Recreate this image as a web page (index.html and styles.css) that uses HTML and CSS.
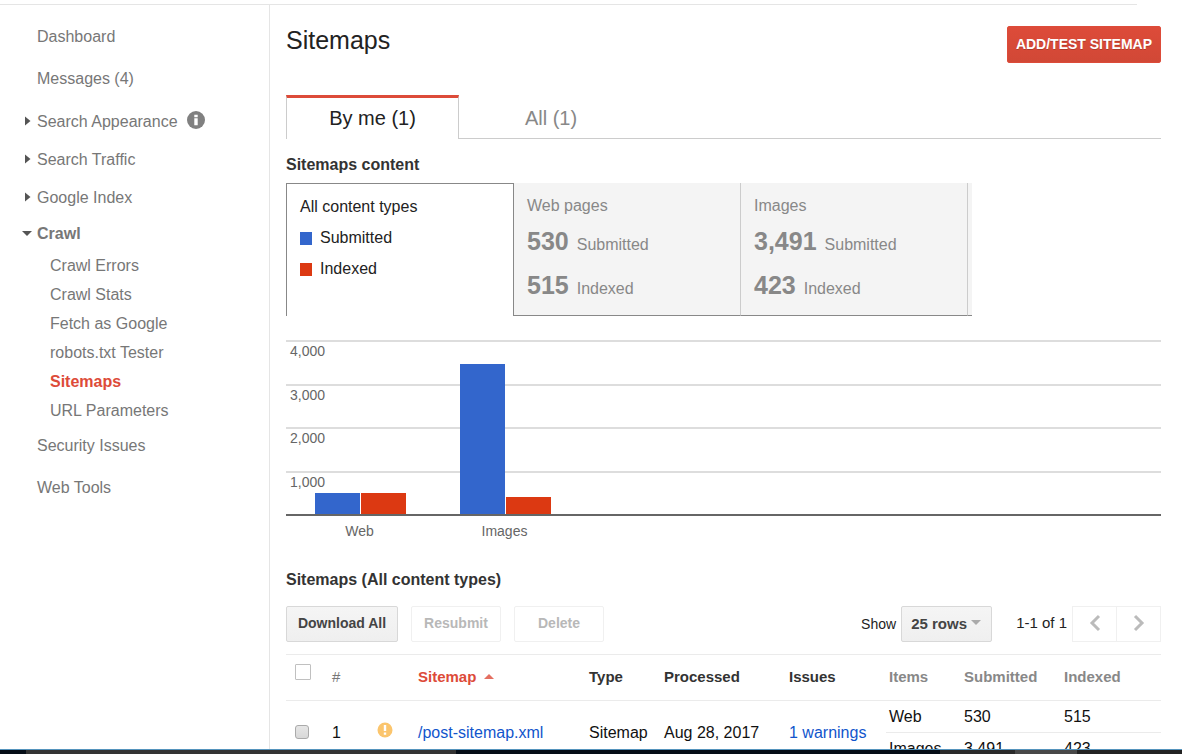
FILE: index.html
```html
<!DOCTYPE html>
<html lang="en">
<head>
<meta charset="utf-8">
<title>Sitemaps</title>
<link rel="stylesheet" href="styles.css">
</head>
<body>
<div class="topline"></div>
<div class="shell">
  <nav class="sidebar" aria-label="Site">
    <ul class="nav">
      <li><a class="nav-link" href="#">Dashboard</a></li>
      <li><a class="nav-link" href="#">Messages (4)</a></li>
    </ul>
    <ul class="nav nav-groups">
      <li class="nav-group">
        <svg class="caret" viewBox="0 0 10 10" aria-hidden="true"><path d="M3 0.5L8.5 5L3 9.5Z"/></svg>
        <a href="#">Search Appearance</a>
        <svg class="info" viewBox="0 0 18 18" aria-label="Information"><circle cx="9" cy="9" r="9" fill="#808080"/><path d="M7.3 3.8h3.4v2.4H7.3zM7.3 7.2h3.4v7H7.3z" fill="#fff"/></svg>
      </li>
      <li class="nav-group">
        <svg class="caret" viewBox="0 0 10 10" aria-hidden="true"><path d="M3 0.5L8.5 5L3 9.5Z"/></svg>
        <a href="#">Search Traffic</a>
      </li>
      <li class="nav-group">
        <svg class="caret" viewBox="0 0 10 10" aria-hidden="true"><path d="M3 0.5L8.5 5L3 9.5Z"/></svg>
        <a href="#">Google Index</a>
      </li>
      <li class="nav-group nav-open">
        <svg class="caret" viewBox="0 0 10 10" aria-hidden="true"><path d="M0 3H10L5 8Z"/></svg>
        <a href="#">Crawl</a>
      </li>
    </ul>
    <ul class="nav nav-sub">
      <li><a href="#">Crawl Errors</a></li>
      <li><a href="#">Crawl Stats</a></li>
      <li><a href="#">Fetch as Google</a></li>
      <li><a href="#">robots.txt Tester</a></li>
      <li><a class="current" href="#" aria-current="page">Sitemaps</a></li>
      <li><a href="#">URL Parameters</a></li>
    </ul>
    <ul class="nav">
      <li><a class="nav-link" href="#">Security Issues</a></li>
      <li><a class="nav-link" href="#">Web Tools</a></li>
    </ul>
  </nav>

  <main class="main">
    <header class="page-head">
      <h1>Sitemaps</h1>
      <button class="btn-primary" type="button">ADD/TEST SITEMAP</button>
    </header>

    <div class="tabs">
      <button class="tab tab-active" type="button">By me (1)</button>
      <button class="tab" type="button">All (1)</button>
    </div>

    <h2>Sitemaps content</h2>
    <div class="cards">
      <section class="card card-active">
        <h3>All content types</h3>
        <p class="legend"><span class="swatch blue"></span>Submitted</p>
        <p class="legend"><span class="swatch red"></span>Indexed</p>
      </section>
      <section class="card">
        <h3>Web pages</h3>
        <p class="stat"><strong>530</strong>Submitted</p>
        <p class="stat"><strong>515</strong>Indexed</p>
      </section>
      <section class="card">
        <h3>Images</h3>
        <p class="stat"><strong>3,491</strong>Submitted</p>
        <p class="stat"><strong>423</strong>Indexed</p>
      </section>
      <div class="card-end"></div>
    </div>

    <div class="chart">
      <div class="plot">
        <div class="grid">
          <span>4,000</span><span>3,000</span><span>2,000</span><span>1,000</span>
        </div>
        <div class="bars">
          <div class="bar-pair">
            <div class="bar blue" style="height:12%"></div>
            <div class="bar red" style="height:12%"></div>
          </div>
          <div class="bar-pair">
            <div class="bar blue" style="height:86%"></div>
            <div class="bar red" style="height:10%"></div>
          </div>
        </div>
      </div>
      <div class="axis-labels"><span>Web</span><span>Images</span></div>
    </div>

    <h2 class="list-title">Sitemaps (All content types)</h2>
    <div class="toolbar">
      <button class="btn btn-wide" type="button">Download All</button>
      <button class="btn" type="button" disabled>Resubmit</button>
      <button class="btn" type="button" disabled>Delete</button>
      <div class="paging">
        <label for="rows">Show</label>
        <div class="select">
          <select id="rows"><option>25 rows</option></select>
          <svg class="select-caret" viewBox="0 0 10 5" aria-hidden="true"><path d="M0 0H10L5 5Z"/></svg>
        </div>
        <span class="range">1-1 of 1</span>
        <div class="pager">
          <button type="button" aria-label="Previous page" disabled><svg viewBox="0 0 12 18"><path d="M10 2L3 9L10 16"/></svg></button>
          <button type="button" aria-label="Next page" disabled><svg viewBox="0 0 12 18"><path d="M2 2L9 9L2 16"/></svg></button>
        </div>
      </div>
    </div>

    <table class="list">
      <colgroup>
        <col class="c-check"><col class="c-num"><col class="c-icon"><col>
        <col class="c-type"><col class="c-date"><col class="c-issues">
        <col class="c-items"><col class="c-sub"><col class="c-idx">
      </colgroup>
      <thead>
        <tr>
          <th class="check"><input class="box box-all" type="checkbox" aria-label="Select all"></th>
          <th class="num">#</th>
          <th></th>
          <th class="sorted">Sitemap <svg class="sort" viewBox="0 0 10 5" aria-hidden="true"><path d="M0 5H10L5 0Z"/></svg></th>
          <th>Type</th>
          <th>Processed</th>
          <th>Issues</th>
          <th class="muted">Items</th>
          <th class="muted">Submitted</th>
          <th class="muted">Indexed</th>
        </tr>
      </thead>
      <tbody>
        <tr>
          <td rowspan="2" class="check"><input class="box" type="checkbox" aria-label="Select /post-sitemap.xml"></td>
          <td rowspan="2">1</td>
          <td rowspan="2"><svg class="warn" viewBox="0 0 16 16" aria-label="Warning"><circle cx="8" cy="8" r="7.5" fill="#fbc56d"/><path d="M6.8 3h2.4v6H6.8zM6.8 10.5h2.4v2.3H6.8z" fill="#fff"/></svg></td>
          <td rowspan="2"><a href="#">/post-sitemap.xml</a></td>
          <td rowspan="2">Sitemap</td>
          <td rowspan="2">Aug 28, 2017</td>
          <td rowspan="2"><a href="#">1 warnings</a></td>
          <td class="item">Web</td><td class="item">530</td><td class="item">515</td>
        </tr>
        <tr>
          <td class="item">Images</td><td class="item">3,491</td><td class="item">423</td>
        </tr>
      </tbody>
    </table>
  </main>
</div>
<div class="taskbar"></div>
</body>
</html>
```

FILE: styles.css
```css
* { box-sizing: border-box; }

body {
  margin: 0;
  height: 100vh;
  display: flex;
  flex-direction: column;
  overflow: hidden;
  background: #fff;
  color: #222;
  font-family: "Liberation Sans", Arial, sans-serif;
  font-size: 16px;
  line-height: 20px;
}

button, select { font-family: inherit; margin: 0; }
h1, h2, h3, p, ul { margin: 0; padding: 0; }
a { color: #15c; text-decoration: none; }

.topline {
  flex: none;
  margin: 4px 45px 0 0;
  height: 1px;
  background: #e5e5e5;
}
.shell { flex: 1; min-height: 0; display: flex; overflow: hidden; }

/* Sidebar */
.sidebar {
  flex: none;
  width: 270px;
  padding-top: 11px;
  border-right: 1px solid #e5e5e5;
}
.nav { list-style: none; }
.sidebar a { color: #777; }
.nav-link { display: block; padding: 11px 0 11px 37px; }
.nav-groups { padding-top: 3px; }
.nav-group {
  display: flex;
  align-items: center;
  height: 38px;
  padding-left: 22px;
}
.caret { width: 10px; height: 10px; margin: 0 5px 2px 0; fill: #555; }
.info { width: 18px; height: 18px; margin: 0 0 4px 9px; }
.nav-open { height: 34px; font-weight: bold; }
.nav-sub { padding-left: 50px; }
.nav-sub a { display: block; line-height: 29px; }
.sidebar .current { color: #dd4b39; font-weight: bold; }

/* Main column */
.main { flex: 1; min-width: 0; padding: 21px 21px 0 16px; }
.page-head { display: flex; justify-content: space-between; align-items: flex-start; }
h1 { font-size: 25px; line-height: 29px; font-weight: normal; }
.btn-primary {
  height: 37px;
  padding: 0 8px 2px;
  border: 1px solid #dd4b39;
  border-radius: 2px;
  background: linear-gradient(#dd4b39, #d14836);
  color: #fff;
  font-size: 14px;
  font-weight: bold;
  text-shadow: 0 1px rgba(0, 0, 0, 0.2);
}

.tabs { display: flex; height: 44px; margin-top: 32px; }
.tabs::after { content: ""; flex: 1; border-bottom: 1px solid #ccc; }
.tab {
  width: 184px;
  padding: 3px 0 0;
  border: 0;
  border-bottom: 1px solid #ccc;
  background: none;
  color: #888;
  font-size: 20px;
}
.tab-active {
  width: 173px;
  padding: 0;
  border: 1px solid #ccc;
  border-top: 3px solid #dd4b39;
  border-bottom: 0;
  color: #222;
}

h2 { margin-top: 16px; font-size: 16px; line-height: 20px; color: #333; }

.cards { display: flex; height: 133px; margin-top: 8px; }
.card {
  width: 227px;
  padding: 13px 13px 0;
  background: #f4f4f4;
  border-right: 1px solid #ccc;
  border-bottom: 1px solid #888;
  color: #888;
}
.card h3 { font-size: 16px; font-weight: normal; line-height: 20px; }
.card-active {
  width: 228px;
  background: #fff;
  border: 1px solid #888;
  border-bottom: 0;
  color: #222;
}
.card-end { width: 4px; background: #f4f4f4; border-bottom: 1px solid #888; }
.legend { display: flex; align-items: center; gap: 8px; margin-top: 11px; }
.swatch { width: 12px; height: 13px; }
.blue { background: #3366cc; }
.red { background: #dc3912; }
.stat { display: flex; align-items: baseline; gap: 8px; line-height: 30px; margin-top: 10px; }
.stat strong { font-size: 25px; }

/* Chart */
.chart { margin-top: 24px; color: #666; font-size: 14px; }
.plot { display: grid; height: 176px; border-bottom: 2px solid #666; }
.grid, .bars { grid-area: 1 / 1; }
.grid { display: flex; flex-direction: column; }
.grid span { flex: 1; padding-left: 4px; border-top: 2px solid #ddd; line-height: 19px; }
.bars { display: flex; gap: 54px; padding-left: 29px; }
.bar-pair { display: flex; align-items: flex-end; gap: 1px; }
.bar { width: 45px; }
.axis-labels { display: flex; gap: 54px; padding: 5px 0 0 28px; text-align: center; }
.axis-labels span { width: 91px; }

/* Toolbar */
.list-title { margin-top: 29px; }
.toolbar { display: flex; gap: 13px; margin-top: 16px; font-size: 14px; color: #222; }
.btn {
  width: 90px;
  height: 36px;
  padding: 0 0 2px;
  border: 1px solid #d8d8d8;
  border-radius: 2px;
  background: linear-gradient(#f5f5f5, #efefef);
  color: #444;
  font-size: 14px;
  font-weight: bold;
}
.btn-wide { width: 112px; }
.btn:disabled { background: #fff; border-color: #f0f0f0; color: #b8b8b8; }
.paging { display: flex; align-items: center; margin-left: auto; }
.select { position: relative; margin-left: 5px; }
.select select {
  appearance: none;
  display: block;
  width: 91px;
  height: 36px;
  padding: 0 0 2px 9px;
  border: 1px solid #d8d8d8;
  border-radius: 2px;
  background: linear-gradient(#f5f5f5, #efefef);
  color: #444;
  font-size: 15px;
  font-weight: bold;
}
.select-caret {
  position: absolute;
  right: 11px;
  top: 14px;
  width: 10px;
  height: 5px;
  fill: #aaa;
  pointer-events: none;
}
.range { margin: 0 5px 2px 24px; font-size: 15px; }
.pager { display: flex; }
.pager button {
  width: 45px;
  height: 36px;
  padding: 0 0 2px;
  border: 1px solid #f0f0f0;
  background: #fff;
}
.pager button + button { border-left: 0; width: 44px; }
.pager svg { display: block; width: 12px; height: 18px; margin: 0 auto; fill: none; stroke: #bbb; stroke-width: 3; }

/* Table */
.list {
  width: 100%;
  margin-top: 12px;
  table-layout: fixed;
  border-collapse: separate;
  border-spacing: 0;
  color: #111;
}
.c-check { width: 43px; }
.c-num { width: 45px; }
.c-icon { width: 41px; }
.c-type { width: 75px; }
.c-date { width: 125px; }
.c-issues { width: 100px; }
.c-items { width: 75px; }
.c-sub { width: 100px; }
.c-idx { width: 100px; }
.list th, .list td { padding: 0 0 0 3px; text-align: left; white-space: nowrap; }
.list th {
  height: 47px;
  padding-bottom: 2px;
  border-top: 1px solid #ebebeb;
  border-bottom: 1px solid #ebebeb;
  color: #333;
  font-size: 15px;
}
.list td { height: 32px; }
.list .item { border-bottom: 1px solid #ebebeb; }
.list .num { color: #777; font-weight: normal; }
.list .sorted { color: #dd4b39; }
.list .muted { color: #888; }
.list .check { padding-left: 9px; }
.list th.check { padding-bottom: 11px; }
.sort { width: 10px; height: 5px; margin: 0 0 3px 3px; fill: #e46f61; }
.warn { display: block; width: 16px; height: 16px; margin-bottom: 6px; }
.box {
  appearance: none;
  display: block;
  width: 14px;
  height: 14px;
  margin: 0 0 3px;
  border: 1px solid #aaa;
  border-radius: 3px;
  background: linear-gradient(#e6e6e6, #d8d8d8);
}
.box-all { width: 16px; height: 16px; margin: 0; border-color: #c0c0c0; border-radius: 1px; background: #fff; }

.taskbar {
  flex: none;
  height: 5px;
  border-top: 1px solid #5594bd;
  background: linear-gradient(90deg, #050d16 0 26px, #333 26px 456px, #050d16 456px 940px, #2a2a2a 940px 1015px, #484848 1015px 1077px, #222 1077px);
}
```
